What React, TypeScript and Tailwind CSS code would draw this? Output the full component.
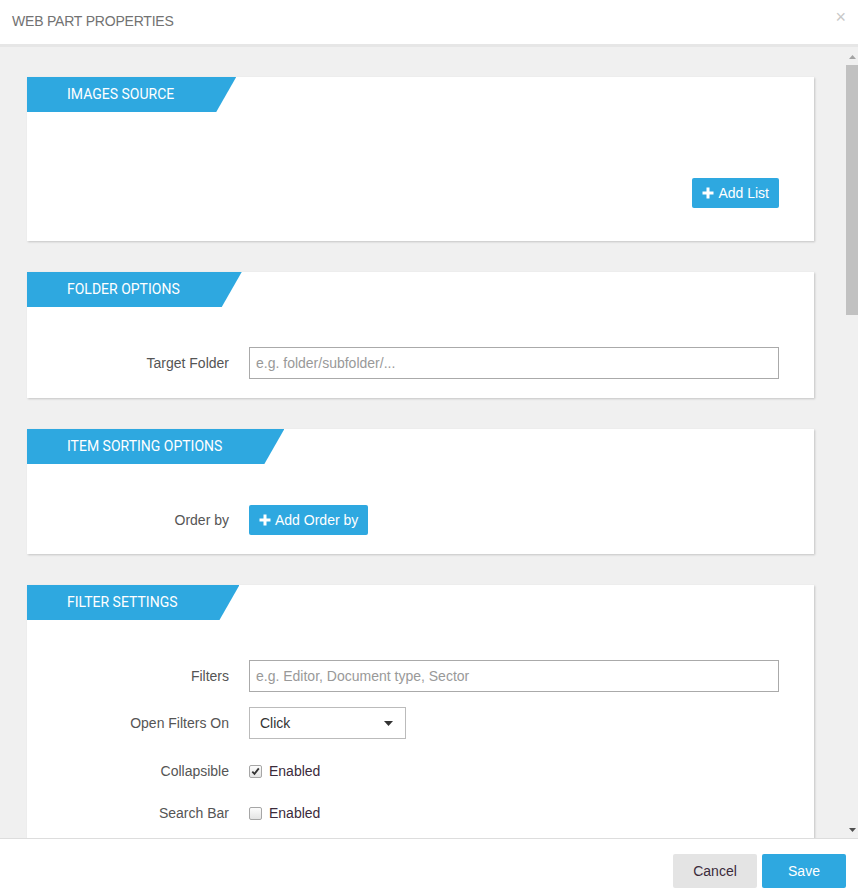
import * as React from "react";

const BLUE = "bg-[#2ea8e0]";

function PlusIcon() {
  return (
    <svg width="12" height="12" viewBox="0 0 12 12" className="mr-[4px] shrink-0" aria-hidden>
      <rect x="4.5" y="0.5" width="3" height="11" fill="white" />
      <rect x="0.5" y="4.5" width="11" height="3" fill="white" />
    </svg>
  );
}

function SectionTab({ title }: { title: string }) {
  return (
    <div
      className={`inline-flex h-[35px] items-center ${BLUE} pl-10 pr-[62px] font-['Roboto',Arial,sans-serif] text-[14px] text-white [clip-path:polygon(0_0,100%_0,calc(100%-20px)_100%,0_100%)]`}
    >
      {title}
    </div>
  );
}

function Card({ title, children }: { title: string; children: React.ReactNode }) {
  return (
    <section className="bg-white shadow-[1px_1px_2px_rgba(0,0,0,0.18)]">
      <SectionTab title={title} />
      {children}
    </section>
  );
}

function Row({ label, children, className = "" }: { label: string; children: React.ReactNode; className?: string }) {
  return (
    <div className={`flex items-center ${className}`}>
      <div className="w-[202px] shrink-0 text-right text-[14px] text-[#555]">{label}</div>
      <div className="ml-5 flex flex-1 items-center">{children}</div>
    </div>
  );
}

function TextInput({ placeholder }: { placeholder: string }) {
  return (
    <div className="flex h-[32px] w-full items-center border border-[#aaa] bg-white px-[6px] text-[14px] text-[#999]">
      {placeholder}
    </div>
  );
}

function Checkbox({ checked }: { checked?: boolean }) {
  return (
    <span className="flex h-[13px] w-[13px] items-center justify-center rounded-[2px] border border-[#a6a6a6] bg-gradient-to-b from-[#fcfcfc] to-[#e4e4e4]">
      {checked && (
        <svg width="9" height="9" viewBox="0 0 9 9" aria-hidden>
          <path d="M1.3 4.6 L3.5 6.9 L7.8 1.4" fill="none" stroke="#333" strokeWidth="1.8" />
        </svg>
      )}
    </span>
  );
}

function BlueButton({ label }: { label: string }) {
  return (
    <div className={`inline-flex h-[30px] items-center rounded-[2px] ${BLUE} px-[10px] text-[14px] text-white`}>
      <PlusIcon />
      {label}
    </div>
  );
}

export default function App() {
  return (
    <div className="flex h-[895px] w-[858px] flex-col overflow-hidden bg-white font-['Liberation_Sans',Arial,sans-serif]">
      {/* dialog title bar */}
      <header className="flex h-[47px] shrink-0 items-start justify-between border-b-[3px] border-[#e6e6e6] bg-white pl-3 pr-[12px] pt-[11px]">
        <span className="text-[14px] tracking-[-0.2px] text-[#727272]">WEB PART PROPERTIES</span>
        <span className="-mt-[3px] text-[18px] leading-none text-[#c8c8c8]">×</span>
      </header>

      <div className="flex min-h-0 flex-1 bg-[#f0f0f0]">
        {/* scrolling form */}
        <div className="flex min-h-0 flex-1 flex-col gap-[31px] overflow-hidden pl-[27px] pr-[32px] pt-[30px]">
          <Card title="IMAGES SOURCE">
            <div className="flex justify-end pb-[33px] pr-[35px] pt-[66px]">
              <BlueButton label="Add List" />
            </div>
          </Card>

          <Card title="FOLDER OPTIONS">
            <div className="pb-[19px] pr-[35px] pt-[40px]">
              <Row label="Target Folder">
                <TextInput placeholder="e.g. folder/subfolder/..." />
              </Row>
            </div>
          </Card>

          <Card title="ITEM SORTING OPTIONS">
            <div className="pb-[19px] pr-[35px] pt-[41px]">
              <Row label="Order by">
                <BlueButton label="Add Order by" />
              </Row>
            </div>
          </Card>

          <Card title="FILTER SETTINGS">
            <div className="pb-[40px] pr-[35px] pt-[40px]">
              <Row label="Filters">
                <TextInput placeholder="e.g. Editor, Document type, Sector" />
              </Row>
              <Row label="Open Filters On" className="mt-[15px]">
                <div className="flex h-[32px] w-[157px] items-center justify-between border border-[#bbb] bg-white pl-[10px] pr-[12px] text-[14px] text-[#333]">
                  <span>Click</span>
                  <svg width="9" height="5" viewBox="0 0 9 5" aria-hidden>
                    <path d="M0 0 H9 L4.5 5 Z" fill="#333" />
                  </svg>
                </div>
              </Row>
              <Row label="Collapsible" className="mt-[19px] h-[26px]">
                <Checkbox checked />
                <span className="ml-[7px] text-[14px] text-[#3b2b3b]">Enabled</span>
              </Row>
              <Row label="Search Bar" className="mt-[16px] h-[26px]">
                <Checkbox />
                <span className="ml-[7px] text-[14px] text-[#3b2b3b]">Enabled</span>
              </Row>
            </div>
          </Card>
        </div>

        {/* scrollbar */}
        <div className="flex w-[12px] shrink-0 flex-col items-center">
          <svg width="7" height="4" viewBox="0 0 7 4" className="mt-[8px]" aria-hidden>
            <path d="M0 4 L3.5 0 L7 4 Z" fill="#a3a3a3" />
          </svg>
          <div className="mt-[6px] h-[250px] w-full bg-[#c1c1c1]" />
          <div className="flex-1" />
          <svg width="7" height="4" viewBox="0 0 7 4" className="mb-[6px]" aria-hidden>
            <path d="M0 0 H7 L3.5 4 Z" fill="#505050" />
          </svg>
        </div>
      </div>

      {/* footer actions */}
      <footer className="flex h-[57px] shrink-0 items-start justify-end gap-[5px] border-t border-[#ddd] bg-white pr-[12px] pt-[15px]">
        <div className="flex h-[34px] w-[84px] items-center justify-center rounded-[2px] bg-[#e4e4e4] text-[14px] text-[#3b2b3b]">
          Cancel
        </div>
        <div className={`flex h-[34px] w-[84px] items-center justify-center rounded-[2px] ${BLUE} text-[14px] text-white`}>
          Save
        </div>
      </footer>
    </div>
  );
}
